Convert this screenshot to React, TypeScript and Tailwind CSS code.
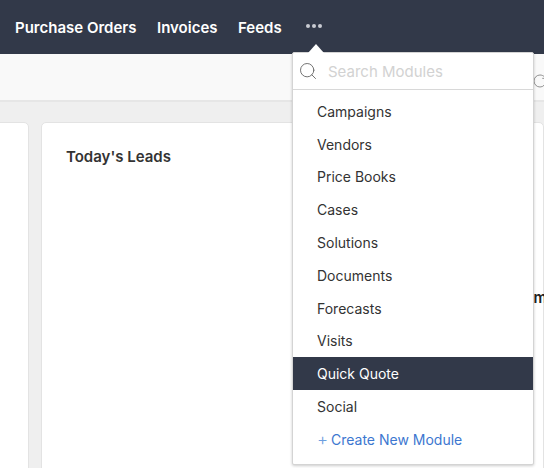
import { Search, RotateCw } from "lucide-react";

const modules = [
  "Campaigns",
  "Vendors",
  "Price Books",
  "Cases",
  "Solutions",
  "Documents",
  "Forecasts",
  "Visits",
  "Quick Quote",
  "Social",
];

const App = () => {
  return (
    <div className="relative h-[468px] w-[544px] overflow-hidden bg-[#efefef] font-['Inter',sans-serif]">
      <nav className="flex h-[54px] items-center gap-[20.5px] bg-[#323949] pl-[15px] pt-[2px] text-[15px] font-semibold text-white">
        <span>Purchase Orders</span>
        <span>Invoices</span>
        <span>Feeds</span>
        <span className="flex gap-[2px] pl-[4px] pb-[5px]">
          <i className="h-[4px] w-[4px] rounded-full bg-[#c9ccd2]" />
          <i className="h-[4px] w-[4px] rounded-full bg-[#c9ccd2]" />
          <i className="h-[4px] w-[4px] rounded-full bg-[#c9ccd2]" />
        </span>
      </nav>

      <div className="flex h-[48px] items-center justify-end border-b-2 border-[#e6e6e6] bg-[#f9f9f9]">
        <RotateCw className="-mr-[4px] mt-[7px] h-[16px] w-[16px] text-[#777]" strokeWidth={1.2} />
      </div>

      <div className="flex gap-[12px] pt-[20px]">
        <div className="-ml-[10px] h-[400px] w-[39px] rounded-[5px] border border-[#e3e3e3] bg-white" />
        <div className="flex h-[400px] flex-1 flex-col rounded-[5px] border border-[#e3e3e3] bg-white pl-[24px] pt-[23px]">
          <h2 className="text-[15px] font-semibold leading-[22px] text-[#333]">Today's Leads</h2>
          <span className="-mr-[4px] mt-[120px] self-end text-[15px] font-semibold leading-[20px] text-[#222]">um</span>
        </div>
      </div>

      <div className="absolute left-[292px] top-[52px] w-[242px] rounded-[2px] border border-[#d4d4d4] bg-white shadow-[0_1px_3px_rgba(0,0,0,0.2)]">
        <div className="absolute -top-[9px] left-[15px] h-0 w-0 border-x-[8px] border-b-[9px] border-x-transparent border-b-white" />
        <div className="flex h-[37px] items-center border-b border-[#d8d8d8] pl-[5px]">
          <Search className="h-[20px] w-[20px] text-[#666]" strokeWidth={1.1} />
          <span className="pl-[10px] pt-[2px] text-[15px] text-[#d2d2d2]">Search Modules</span>
        </div>
        <ul className="pt-[5px]">
          {modules.map((name) => (
            <li
              key={name}
              className={
                name === "Quick Quote"
                  ? "flex h-[32.8px] items-center bg-[#323949] pl-[24px] text-[14px] text-white"
                  : "flex h-[32.8px] items-center pl-[24px] text-[14px] text-[#333]"
              }
            >
              {name}
            </li>
          ))}
        </ul>
        <div className="flex h-[41px] items-start pl-[24px] pt-[6px] text-[14px] text-[#3d77d0]">
          <span className="w-[14px] text-[17px] font-light leading-[20px] text-[#6b9ee0]">+</span>
          Create New Module
        </div>
      </div>
    </div>
  );
};

export default App;
